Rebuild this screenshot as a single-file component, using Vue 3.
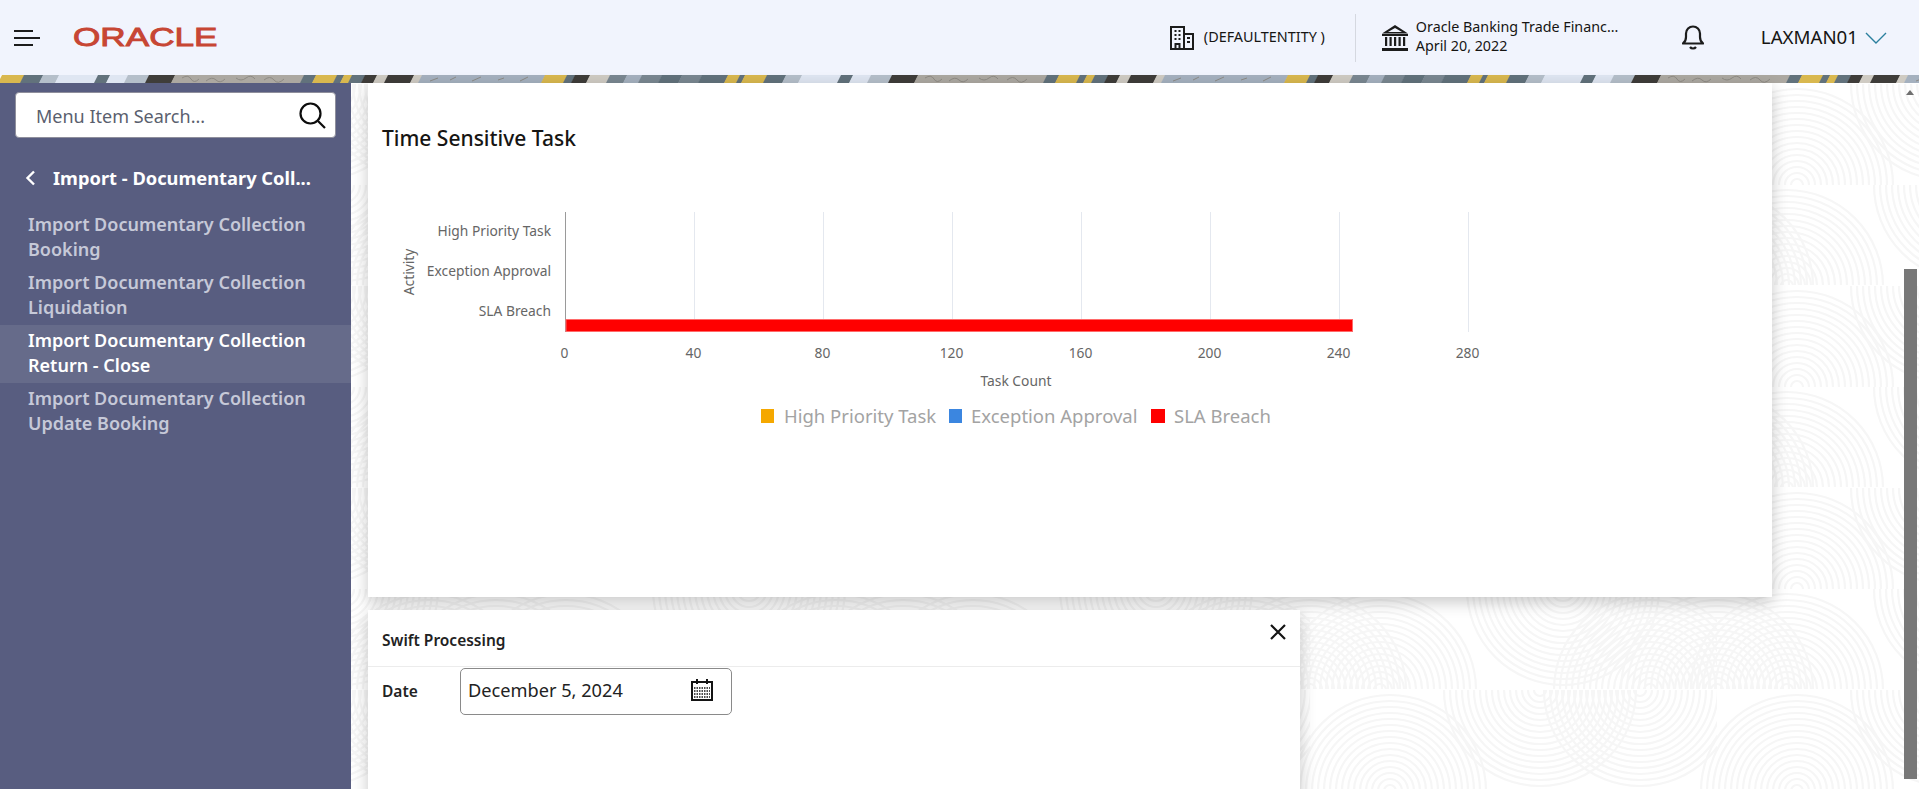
<script setup>
const menu = [
  { a: 'Import Documentary Collection', b: 'Booking' },
  { a: 'Import Documentary Collection', b: 'Liquidation' },
  { a: 'Import Documentary Collection', b: 'Return - Close', active: true },
  { a: 'Import Documentary Collection', b: 'Update Booking' }
]

/* decorative banner: one period of 743px */
const Y = '#d9b84f', S = '#62727c', G = '#b5bfca', P = '#dfe6f2', D = '#3f3d3a', T = '#aca8a1', B = '#a5b1bf', L = '#cfcbc3', M = '#7a8791'
const segs = [
  [0, 22, Y], [22, 41, S], [41, 57, G], [57, 96, P], [96, 108, S], [108, 126, P], [126, 147, G],
  [147, 173, D], [173, 302, T], [302, 314, S], [314, 335, Y], [335, 342, S], [342, 350, Y],
  [350, 363, S], [363, 375, D], [375, 386, L], [386, 412, D], [412, 420, L], [420, 543, B],
  [543, 565, Y], [565, 573, S], [573, 588, D], [588, 608, L], [608, 625, M], [625, 640, B],
  [640, 660, M], [660, 680, S], [680, 700, M], [700, 726, S], [726, 738, Y], [738, 743, S]
]
const banner = []
for (let k = 0; k < 3; k++) {
  for (const [a, b, c] of segs) {
    const x = a + k * 743, w = b - a
    banner.push({ points: `${x + 2},0 ${x + w + 2.5},0 ${x + w - 1.5},8 ${x - 2},8`, c })
  }
}
const squiggles = []
for (let k = 0; k < 3; k++) {
  const o = k * 743
  squiggles.push(`M${o + 182} 3q6 -4 9 1t8 0 M${o + 206} 6q6 -5 10 -1t9 -1 M${o + 236} 3q5 4 10 0t9 1 M${o + 264} 5q6 -5 10 0t10 -1`)
  squiggles.push(`M${o + 430} 6l8 -3 M${o + 450} 5l6 -3 M${o + 472} 6l9 -4 M${o + 498} 5l6 -2 M${o + 520} 6l8 -4`)
}

/* fingerprint-like wallpaper */
const radii = Array.from({ length: 16 }, (_, i) => 6 + i * 6)
const bandA = [0, 70, 340, 407, 477].map(cx => ({ cx, cy: 101 })).concat([{ cx: 253, cy: 0 }])
const bandB = [80, 487].map(cx => ({ cx, cy: 101 })).concat([{ cx: 230, cy: 0 }, { cx: 330, cy: 0 }])

const ticks = [0, 40, 80, 120, 160, 200, 240, 280].map((v, i) => ({ v, x: 565.5 + i * 129 }))
</script>

<template>
  <div class="app">
    <svg class="wall" width="1919" height="789" aria-hidden="true">
      <defs>
        <pattern id="prints" width="407" height="202" patternUnits="userSpaceOnUse" patternTransform="translate(89 185)">
          <svg x="0" y="0" width="407" height="100">
            <g v-for="(c, i) in bandA" :key="'a' + i">
              <circle v-for="r in radii" :key="r" :cx="c.cx" :cy="c.cy" :r="r" fill="none" stroke="#f6f6f6" stroke-width="2.2" />
            </g>
          </svg>
          <svg x="0" y="101" width="407" height="101">
            <g v-for="(c, i) in bandB" :key="'b' + i">
              <circle v-for="r in radii" :key="r" :cx="c.cx" :cy="c.cy" :r="r" fill="none" stroke="#f6f6f6" stroke-width="2.2" />
            </g>
          </svg>
        </pattern>
      </defs>
      <rect width="1919" height="789" fill="#fff" />
      <rect width="1919" height="789" fill="url(#prints)" />
    </svg>

    <header class="topbar">
      <button class="burger" aria-label="Menu"><i></i><i class="long"></i><i></i></button>
      <svg class="logo" width="146" height="30" viewBox="0 0 146 30">
        <text x="0" y="24" textLength="144.5" lengthAdjust="spacingAndGlyphs" class="logo-text">ORACLE</text>
      </svg>
      <div class="spacer"></div>

      <div class="entity">
        <svg width="24" height="24" viewBox="0 0 24 24" fill="none" stroke="#1c1c1c" stroke-width="2">
          <path d="M1 23V1h13v22M14 8h9v15M0 23h24" />
          <path d="M4.5 5h2M8.500 5h2M4.500 9h2M8.500 9h2M4.500 13h2M8.500 13h2M17 12h3M17 16h3" stroke-width="2.200" />
          <path d="M5.500 23v-5h4v5" />
        </svg>
        <span>(DEFAULTENTITY )</span>
      </div>
      <div class="vline"></div>

      <div class="bank">
        <svg width="26" height="26" viewBox="0 0 26 26" fill="#1c1c1c">
          <path d="M13 0 26 8.500H0ZM13 3 6 7h14Z" fill-rule="evenodd" />
          <rect x="0" y="9" width="26" height="2" />
          <rect x="3" y="12" width="2.200" height="9" /><rect x="7.500" y="12" width="2.200" height="9" />
          <rect x="12" y="12" width="2.200" height="9" /><rect x="16.500" y="12" width="2.200" height="9" />
          <rect x="21" y="12" width="2.200" height="9" />
          <rect x="0" y="23" width="26" height="3" />
        </svg>
        <div class="bank-text">
          <span>Oracle Banking Trade Financ...</span>
          <span>April 20, 2022</span>
        </div>
      </div>

      <div class="bell">
        <svg width="22" height="25" viewBox="0 0 22 25" fill="none" stroke="#1c1c1c" stroke-width="2.200">
          <path d="M1 18.500c2-1.500 3-3 3-6.500V8.500a7 7 0 0 1 14 0V12c0 3.500 1 5 3 6.500Z" stroke-linejoin="round" />
          <path d="M8 22c1.500 2 4.500 2 6 0" />
        </svg>
      </div>

      <div class="user">
        <span>LAXMAN01</span>
        <svg width="22" height="12" viewBox="0 0 22 12" fill="none" stroke="#2b7f9e" stroke-width="1.400">
          <path d="M1 1l10 10L21 1" />
        </svg>
      </div>
    </header>

    <svg class="banner" width="1919" height="8" aria-hidden="true">
      <g class="banner-art">
        <polygon v-for="(p, i) in banner" :key="i" :points="p.points" :fill="p.c" />
        <path v-for="(d, i) in squiggles" :key="'s' + i" :d="d" fill="none" stroke="#8a8780" stroke-width="0.900" />
      </g>
    </svg>

    <div class="body">
      <aside class="sidebar">
        <div class="search">
          <span>Menu Item Search...</span>
          <svg width="27" height="27" viewBox="0 0 27 27" fill="none" stroke="#0c0c0c" stroke-width="2.200">
            <circle cx="11.500" cy="11.500" r="10" />
            <path d="M19 19l7 7" />
          </svg>
        </div>
        <div class="crumb">
          <svg width="11" height="16" viewBox="0 0 11 16" fill="none" stroke="#fff" stroke-width="2.400">
            <path d="M9 1.500 2.500 8 9 14.500" />
          </svg>
          <span>Import - Documentary Coll...</span>
        </div>
        <ul class="menu">
          <li v-for="(m, i) in menu" :key="i" :class="{ active: m.active }">{{ m.a }}<br />{{ m.b }}</li>
        </ul>
      </aside>

      <main class="main">
        <section class="card chart-card">
          <h2>Time Sensitive Task</h2>
          <svg class="chart" width="1404" height="240" viewBox="368 200 1404 240">
            <line v-for="t in ticks.slice(1)" :key="t.v" :x1="t.x" :x2="t.x" y1="212" y2="332" stroke="#e4e8ef" />
            <line x1="565.500" x2="565.500" y1="212" y2="332" stroke="#9a9a9a" />
            <rect x="566" y="319.500" width="786.500" height="12" fill="#ff0000" stroke="#ff6a6a" stroke-width="1" />
            <g class="lbl" text-anchor="end">
              <text x="551" y="235.500">High Priority Task</text>
              <text x="551" y="275.500">Exception Approval</text>
              <text x="551" y="315.500">SLA Breach</text>
            </g>
            <g class="lbl" text-anchor="middle">
              <text v-for="t in ticks" :key="t.v" :x="t.x - 1" y="358">{{ t.v }}</text>
              <text x="1016" y="385.500">Task Count</text>
              <text transform="translate(414 272) rotate(-90)">Activity</text>
            </g>
            <g class="legend">
              <rect x="761" y="409" width="13" height="14" fill="#f5a800" />
              <text x="784" y="422.500">High Priority Task</text>
              <rect x="949" y="409" width="13" height="14" fill="#3b86e0" />
              <text x="971" y="422.500">Exception Approval</text>
              <rect x="1151" y="409" width="14" height="14" fill="#ff0000" />
              <text x="1174" y="422.500">SLA Breach</text>
            </g>
          </svg>
        </section>

        <section class="card swift">
          <div class="swift-head">
            <h3>Swift Processing</h3>
            <svg width="18" height="18" viewBox="0 0 18 18" stroke="#141414" stroke-width="2.200" fill="none">
              <path d="M2 2l14 14M16 2 2 16" />
            </svg>
          </div>
          <div class="swift-row">
            <label>Date</label>
            <div class="date">
              <span>December 5, 2024</span>
              <svg width="22" height="22" viewBox="0 0 22 22" fill="none" stroke="#141414">
                <rect x="1" y="3" width="20" height="18" stroke-width="2" />
                <path d="M6 0v5M16 0v5" stroke-width="2" />
                <path d="M3 9h16M3 12h16M3 15h16M3 18h16" stroke-width="1.500" stroke-dasharray="1.500 1" />
              </svg>
            </div>
          </div>
        </section>
      </main>
    </div>

    <div class="scrollbar" aria-hidden="true">
      <i class="arrow"></i>
      <i class="thumb"></i>
    </div>
  </div>
</template>

<style>
html, body { margin: 0; height: 100%; overflow: hidden; background: #fff; }
</style>

<style scoped>
.app {
  position: relative;
  width: 1919px;
  height: 789px;
  overflow: hidden;
  display: flex;
  flex-direction: column;
  font-family: "Noto Sans", "Open Sans", sans-serif;
  color: #161513;
}
.wall { position: absolute; inset: 0; }
.topbar {
  position: relative;
  flex: none;
  height: 75px;
  box-sizing: border-box;
  padding: 0 32px 0 14px;
  display: flex;
  align-items: center;
  background: #f1f4fd;
}
.burger {
  width: 26px;
  margin-right: 33px;
  padding: 0;
  border: 0;
  background: none;
  display: flex;
  flex-direction: column;
  gap: 5px;
}
.burger i { display: block; width: 19px; height: 2px; background: #1c1c1c; }
.burger i.long { width: 26px; }
.logo { display: block; overflow: visible; margin-top: -1px; }
.logo-text {
  font-family: "Liberation Sans", sans-serif;
  font-size: 26px;
  font-weight: 400;
  fill: #c74634;
  stroke: #c74634;
  stroke-width: 0.9px;
}
.spacer { flex: 1; }
.entity {
  width: 185px;
  display: flex;
  align-items: center;
  gap: 10px;
  font-size: 14.4px;
}
.entity span { margin-top: -2px; }
.entity svg { flex: none; }
.vline { width: 1px; height: 48px; background: #d5d8e0; margin-right: 26px; }
.bank { width: 300px; display: flex; align-items: center; gap: 8px; }
.bank-text { display: flex; flex-direction: column; margin-top: -3px; font-size: 14.300px; line-height: 19px; }
.bell { width: 79px; display: flex; margin-top: -1px; }
.user { display: flex; align-items: center; gap: 7px; font-size: 18.700px; }
.user span { margin-top: -2px; }
.banner { position: relative; display: block; flex: none; }
.banner-art { filter: blur(0.5px); }
.body { position: relative; flex: 1; min-height: 0; display: flex; }
.sidebar {
  flex: none;
  width: 351px;
  background: #585d80;
  box-sizing: border-box;
  padding-top: 9px;
}
.search {
  box-sizing: border-box;
  width: 321px;
  height: 46px;
  margin-left: 15px;
  padding: 2px 9px 0 20px;
  display: flex;
  align-items: center;
  justify-content: space-between;
  background: #fff;
  border: 1px solid #8f8f9c;
  border-radius: 4px;
  font-size: 18px;
  color: #5a5f6e;
}
.search svg { margin-top: -2px; }
.crumb {
  display: flex;
  align-items: center;
  gap: 17px;
  margin: 27px 0 0 25px;
  height: 25px;
  font-size: 18.300px;
  font-weight: 700;
  color: #fff;
  white-space: nowrap;
}
.menu { list-style: none; margin: 19px 0 0; padding: 0; }
.menu li {
  height: 58px;
  box-sizing: border-box;
  padding: 3px 0 0 28px;
  font-size: 18px;
  line-height: 25px;
  font-weight: 600;
  color: #c6c9d8;
  white-space: nowrap;
}
.menu li.active { background: #666b8a; color: #fff; }
.main {
  flex: 1;
  min-width: 0;
  padding-left: 17px;
  display: flex;
  flex-direction: column;
  gap: 13px;
}
.card { background: #fff; flex: none; box-shadow: 0 5px 15px rgba(0, 0, 0, 0.22); }
.chart-card { width: 1404px; height: 514px; box-sizing: border-box; padding-top: 41px; }
.chart-card h2 {
  margin: 0 0 48px 14px;
  font-size: 21px;
  line-height: 28px;
  font-weight: 500;
  color: #161513;
}
.chart { display: block; }
.lbl text, .lbl { font-size: 13.800px; fill: #666; }
.legend text { font-size: 18.500px; fill: #a3a3a3; }
.swift { width: 932px; height: 260px; }
.swift-head {
  height: 57px;
  box-sizing: border-box;
  padding: 0 13px 0 14px;
  display: flex;
  align-items: center;
  justify-content: space-between;
  border-bottom: 1px solid #ececec;
}
.swift-head h3 { margin: 3px 0 0; font-size: 15.500px; font-weight: 600; color: #222; }
.swift-head svg { margin-top: -13px; }
.swift-row { display: flex; align-items: center; padding: 1px 0 0 14px; }
.swift-row label { width: 78px; padding-bottom: 2px; font-size: 15.500px; font-weight: 600; color: #222; }
.date {
  box-sizing: border-box;
  width: 272px;
  height: 47px;
  padding: 0 18px 3px 7px;
  display: flex;
  align-items: center;
  justify-content: space-between;
  border: 1px solid #8a8a8a;
  border-radius: 5px;
  font-size: 18.200px;
  color: #222;
}
.scrollbar { position: absolute; top: 83px; right: 2px; bottom: 10px; width: 13px; }
.arrow {
  position: absolute;
  left: 2px;
  top: 7px;
  width: 0;
  height: 0;
  border-left: 4px solid transparent;
  border-right: 4px solid transparent;
  border-bottom: 5px solid #6f6f6f;
}
.thumb { position: absolute; left: 0; right: 0; top: 186px; bottom: 0; background: #787878; }
</style>
